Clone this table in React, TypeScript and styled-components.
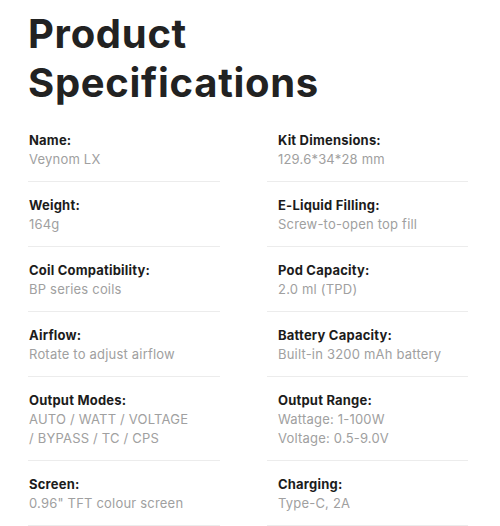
import styled, { createGlobalStyle } from 'styled-components';

const GlobalStyle = createGlobalStyle`
  html, body {
    margin: 0;
    padding: 0;
    background: #ffffff;
  }
  body {
    font-family: Inter, 'Noto Sans', 'Liberation Sans', sans-serif;
    -webkit-font-smoothing: antialiased;
  }
`;

const Page = styled.section`
  padding: 9px 0 0 28px;
  width: 500px;
  box-sizing: border-box;
`;

const Title = styled.h2`
  margin: 0 0 10px;
  font-size: 40px;
  line-height: 49px;
  font-weight: 650;
  color: #222222;
  letter-spacing: 0.7px;
`;

const SpecGrid = styled.div`
  display: grid;
  grid-template-columns: 192px 201px;
  column-gap: 47px;
`;

const SpecItem = styled.div<{ $inset?: boolean }>`
  padding: 14px 0 12px ${(p) => (p.$inset ? '11px' : '1px')};
  border-bottom: 1px solid #ececec;
  font-size: 13px;
  line-height: 19px;
`;

const Label = styled.div`
  font-weight: 700;
  color: #1c1c1c;
  letter-spacing: 0.2px;
`;

const Value = styled.div`
  color: #a0a0a0;
  font-weight: 400;
  letter-spacing: 0.2px;
`;

type Spec = { label: string; value: string[] };

const specs: Spec[] = [
  { label: 'Name:', value: ['Veynom LX'] },
  { label: 'Kit Dimensions:', value: ['129.6*34*28 mm'] },
  { label: 'Weight:', value: ['164g'] },
  { label: 'E-Liquid Filling:', value: ['Screw-to-open top fill'] },
  { label: 'Coil Compatibility:', value: ['BP series coils'] },
  { label: 'Pod Capacity:', value: ['2.0 ml (TPD)'] },
  { label: 'Airflow:', value: ['Rotate to adjust airflow'] },
  { label: 'Battery Capacity:', value: ['Built-in 3200 mAh battery'] },
  { label: 'Output Modes:', value: ['AUTO / WATT / VOLTAGE', '/ BYPASS / TC / CPS'] },
  { label: 'Output Range:', value: ['Wattage: 1-100W', 'Voltage: 0.5-9.0V'] },
  { label: 'Screen:', value: ['0.96" TFT colour screen'] },
  { label: 'Charging:', value: ['Type-C, 2A'] },
];

export default function App() {
  return (
    <>
      <GlobalStyle />
      <Page>
        <Title>
          Product
          <br />
          Specifications
        </Title>
        <SpecGrid>
          {specs.map((s, i) => (
            <SpecItem key={s.label} $inset={i % 2 === 1}>
              <Label>{s.label}</Label>
              {s.value.map((v) => (
                <Value key={v}>{v}</Value>
              ))}
            </SpecItem>
          ))}
        </SpecGrid>
      </Page>
    </>
  );
}
